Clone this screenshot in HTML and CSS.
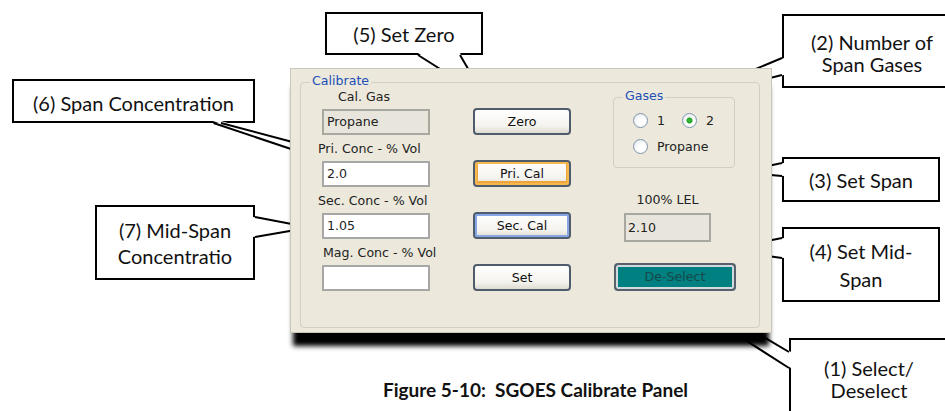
FILE: index.html
```html
<!DOCTYPE html>
<html>
<head>
  <title>SGOES Calibrate Panel</title>
  <link rel="stylesheet" href="styles.css">
</head>
<body>
  <div class="figure">
    <div class="callout callout-zero">(5) Set Zero</div>
    <div class="callout callout-span-conc">(6) Span Concentration</div>
    <div class="callout callout-gases">(2) Number of<br>Span Gases</div>
    <div class="callout callout-set-span">(3) Set Span</div>
    <div class="callout callout-mid-conc">(7) Mid-Span<br>Concentratio</div>
    <div class="callout callout-mid-span">(4) Set Mid-<br>Span</div>
    <div class="callout callout-select">(1) Select/<br>Deselect</div>

    <!-- callout pointers, the tips run in under the panel -->
    <svg class="pointers" width="945" height="411" viewBox="0 0 945 411">
      <path class="wedge" d="M418 53 L457.6 80 L474.6 80 L460 53 Z"/>
      <path class="wedge-edge" d="M418 55 L457.6 80 M460 55 L474.6 80"/>

      <path class="wedge" d="M213 121 L300 152 L300 144 L221 121 Z"/>
      <path class="wedge-edge" d="M221 123 L300 144 M213.5 123 L300 152"/>

      <path class="wedge" d="M253 217 L310 227.5 L253 237 Z"/>
      <path class="wedge-edge" d="M255 217 L310 227.5 M255 237 L310 227.5"/>

      <path class="wedge" d="M784 58 L740 75.5 L740 85.5 L784 75 Z"/>
      <path class="wedge-edge" d="M782 58 L740 75.5 M782 75 L740 85.5"/>

      <path class="wedge" d="M784 163 L760 167.6 L760 174 L784 176 Z"/>
      <path class="wedge-edge" d="M782 163 L760 167.6 M782 176 L760 174"/>

      <path class="wedge" d="M784 238 L760 242.4 L760 255 L784 258 Z"/>
      <path class="wedge-edge" d="M782 238 L760 242.4 M782 258 L760 255"/>

      <path class="wedge" d="M791 352 L740 322 L740 336.6 L791 368 Z"/>
      <path class="wedge-edge" d="M789 352 L740 323 M789 368 L740 336.6"/>
    </svg>

    <div class="panel">
      <div class="groupbox calibrate">
        <span class="groupbox-title">Calibrate</span>

        <div class="fields">
          <div class="field-label label-gas">Cal. Gas</div>
          <div class="textbox disabled">Propane</div>
          <div class="field-label">Pri. Conc - % Vol</div>
          <div class="textbox">2.0</div>
          <div class="field-label">Sec. Conc - % Vol</div>
          <div class="textbox">1.05</div>
          <div class="field-label label-mag">Mag. Conc - % Vol</div>
          <div class="textbox"></div>
        </div>

        <div class="buttons">
          <div class="btn">Zero</div>
          <div class="btn btn-hover">Pri. Cal</div>
          <div class="btn btn-default">Sec. Cal</div>
          <div class="btn">Set</div>
        </div>

        <div class="options">
          <div class="groupbox gases">
            <span class="groupbox-title">Gases</span>
            <div class="radio-row">
              <span class="radio"></span><span class="radio-label">1</span>
              <span class="radio checked second"></span><span class="radio-label">2</span>
            </div>
            <div class="radio-row">
              <span class="radio"></span><span class="radio-label">Propane</span>
            </div>
          </div>

          <div class="lel">
            <div class="lel-label">100% LEL</div>
            <div class="textbox disabled lel-box">2.10</div>
          </div>

          <div class="btn btn-deselect">De-Select</div>
        </div>
      </div>
    </div>

    <div class="caption">Figure 5-10:&nbsp; SGOES Calibrate Panel</div>
  </div>
</body>
</html>
```

FILE: styles.css
```css
body {
  margin: 0;
  background: #fff;
}
.figure {
  position: relative;
  width: 945px;
  height: 411px;
  box-sizing: border-box;
  padding: 68px 0 0 290px;
  overflow: hidden;
}

/* callouts */
.callout {
  position: absolute;
  z-index: 1;
  box-sizing: border-box;
  display: flex;
  align-items: center;
  justify-content: center;
  text-align: center;
  border: 2px solid #000;
  background: #fff;
  font-family: Lato, "Open Sans", sans-serif;
  font-size: 20px;
  line-height: 24px;
  color: #111;
}
.callout-zero { left: 325px; top: 12px; width: 158px; height: 43px; }
.callout-span-conc { left: 12px; top: 79px; width: 243px; height: 44px; padding-top: 4px; }
.callout-gases { left: 782px; top: 14px; width: 180px; height: 74px; line-height: 22px; padding-top: 4px; }
.callout-set-span { left: 782px; top: 157px; width: 158px; height: 45px; }
.callout-mid-conc { left: 95px; top: 205px; width: 160px; height: 75px; line-height: 26px; }
.callout-mid-span { left: 782px; top: 227px; width: 158px; height: 75px; line-height: 28px; }
.callout-select {
  left: 789px; top: 338px; width: 160px; height: 90px;
  align-items: flex-start;
  padding-top: 17px;
  line-height: 22px;
}

.pointers {
  position: absolute;
  left: 0;
  top: 0;
  z-index: 2;
}
.wedge {
  fill: #fff;
}
.wedge-edge {
  fill: none;
  stroke: #000;
  stroke-width: 2;
}

/* the dialog */
.panel {
  position: relative;
  z-index: 3;
  box-sizing: border-box;
  width: 482px;
  height: 265px;
  padding: 13px 11px 4px 9px;
  background: #ece9dc;
  border: 1px solid #cac7b8;
  box-shadow: 0 16px 5px -3px #000;
  font-family: "DejaVu Sans", Verdana, sans-serif;
  font-size: 12.6px;
  color: #222;
}
.groupbox {
  position: relative;
  box-sizing: border-box;
  border: 1px solid #d3d0c1;
  border-radius: 4px;
}
.groupbox-title {
  position: absolute;
  left: 9px;
  top: -10px;
  padding: 0 2px;
  line-height: 16px;
  background: #ece9dc;
  color: #2150b8;
}
.calibrate {
  display: flex;
  align-items: flex-start;
  height: 100%;
}

.fields {
  display: flex;
  flex-direction: column;
  width: 122px;
  margin-left: 17px;
}
.field-label {
  margin-top: 6px;
  line-height: 16px;
  white-space: nowrap;
}
.label-gas {
  padding-left: 20px;
}
.label-mag {
  padding-left: 5px;
}
.textbox {
  box-sizing: border-box;
  width: 108px;
  height: 26px;
  margin: 4px 0 0 4px;
  padding-left: 3px;
  border: 2px solid #a6a7a4;
  background: #fff;
  line-height: 22px;
}
.textbox.disabled {
  background: #e8e6dc;
  border-color: #a9a8a0;
}

.buttons {
  display: flex;
  flex-direction: column;
  gap: 25px;
  width: 98px;
  margin-left: 33px;
  padding-top: 25px;
}
.btn {
  box-sizing: border-box;
  height: 27px;
  border: 2px solid #4f5c6c;
  border-radius: 4px;
  background: linear-gradient(#fff, #f4f3ee 70%, #dedbd0);
  text-align: center;
  line-height: 23px;
  color: #111;
}
.btn-hover {
  box-shadow: inset 0 0 0 2px #f6b850, inset 0 -1px 0 3px #efa53a;
}
.btn-default {
  box-shadow: inset 0 0 0 2px #86a6e8;
}

.options {
  display: flex;
  flex-direction: column;
  width: 123px;
  margin-left: 42px;
}
.gases {
  width: 122px;
  height: 71px;
  margin-top: 14px;
}
.radio-row {
  display: flex;
  align-items: center;
  height: 15px;
  margin-top: 11px;
  padding-left: 19px;
}
.radio-row:first-of-type {
  margin-top: 15px;
}
.radio {
  box-sizing: border-box;
  width: 15px;
  height: 15px;
  border: 1px solid #7f95ad;
  border-radius: 50%;
  background: radial-gradient(circle at 60% 65%, #fff 30%, #dde3ea);
}
.radio.checked {
  background: radial-gradient(circle, #3fbf3f 0, #21a121 2.5px, transparent 3.5px),
              radial-gradient(circle at 60% 65%, #fff 30%, #dde3ea);
}
.radio.second {
  margin-left: 17px;
}
.radio-label {
  margin-left: 9px;
  line-height: 16px;
}

.lel {
  width: 87px;
  margin-left: 11px;
}
.lel-label {
  margin-top: 24px;
  line-height: 16px;
  text-align: center;
}
.lel-box {
  width: 87px;
  height: 29px;
  margin: 5px 0 0 0;
  padding-left: 2px;
  line-height: 25px;
}
.btn-deselect {
  width: 122px;
  height: 28px;
  margin: 21px 0 0 1px;
  background: #008080;
  border-color: #56616d;
  box-shadow: inset 0 0 0 2px #d3dade;
  color: #164a4a;
  line-height: 24px;
}

.caption {
  width: 482px;
  box-sizing: border-box;
  margin-top: 44px;
  padding-left: 9px;
  text-align: center;
  font-family: Lato, "Open Sans", sans-serif;
  font-weight: bold;
  font-size: 19px;
  line-height: 26px;
  color: #111;
}
```
